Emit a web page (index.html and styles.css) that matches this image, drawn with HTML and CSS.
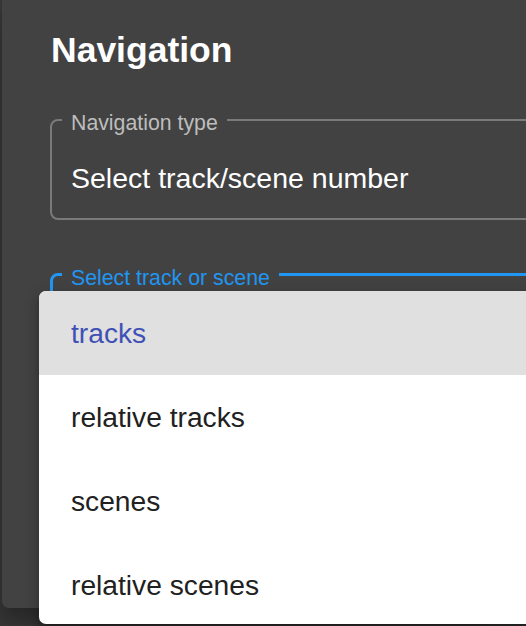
FILE: index.html
```html
<!DOCTYPE html>
<html lang="en">
<head>
<meta charset="utf-8">
<title>Navigation</title>
<link rel="stylesheet" href="styles.css">
</head>
<body>
  <div class="dialog">
    <h2 class="title">Navigation</h2>
    <fieldset class="field">
      <legend class="field-label">Navigation type</legend>
      <div class="field-value">Select track/scene number</div>
    </fieldset>
    <fieldset class="field field--focused">
      <legend class="field-label">Select track or scene</legend>
      <div class="field-value">tracks</div>
    </fieldset>
  </div>
  <ul class="menu">
    <li class="menu-item menu-item--selected">tracks</li>
    <li class="menu-item">relative tracks</li>
    <li class="menu-item">scenes</li>
    <li class="menu-item">relative scenes</li>
  </ul>
</body>
</html>
```

FILE: styles.css
```css
html, body {
  margin: 0;
  padding: 0;
}
body {
  width: 526px;
  height: 626px;
  overflow: hidden;
  background: #383838;
  font-family: "Liberation Sans", Arial, sans-serif;
  position: relative;
}
.dialog {
  margin-left: 2px;
  width: 524px;
  height: 608px;
  box-sizing: border-box;
  padding: 30px 0 0 48px;
  background: #424242;
  border-radius: 0 0 0 7px;
  overflow: hidden;
  box-shadow: 0 11px 15px rgba(0,0,0,0.2), 0 24px 38px rgba(0,0,0,0.14);
}
.title {
  margin: 0 0 0 1px;
  font-size: 35.5px;
  line-height: 40px;
  font-weight: bold;
  color: #ffffff;
}
.field {
  margin: 38px 0 0 0;
  width: 600px;
  box-sizing: border-box;
  border: 2px solid #7a7a7a;
  border-radius: 8px;
  padding: 31px 0 24px 10px;
}
.field-label {
  padding: 7px 9px 0;
  font-size: 21.3px;
  line-height: 16px;
  color: #bdbdbd;
}
.field-value {
  padding-left: 9px;
  font-size: 28.5px;
  line-height: 32px;
  color: #ffffff;
}
.field--focused {
  margin-top: 43px;
  border: 3px solid #2196f3;
  padding-left: 9px;
}
.field--focused .field-label {
  color: #2196f3;
}
.menu {
  position: absolute;
  left: 39px;
  top: 291px;
  width: 497px;
  height: 333px;
  margin: 0;
  padding: 0;
  list-style: none;
  background: #ffffff;
  border-radius: 7px 0 0 7px;
  overflow: hidden;
  box-shadow: 0 5px 5px -3px rgba(0,0,0,0.2), 0 8px 10px 1px rgba(0,0,0,0.14), 0 3px 14px 2px rgba(0,0,0,0.12);
}
.menu-item {
  height: 84px;
  box-sizing: border-box;
  display: flex;
  align-items: center;
  padding-left: 32px;
  font-size: 28.2px;
  line-height: 42px;
  color: #212121;
}
.menu-item--selected {
  background: #e0e0e0;
  color: #3f51b5;
}
```
